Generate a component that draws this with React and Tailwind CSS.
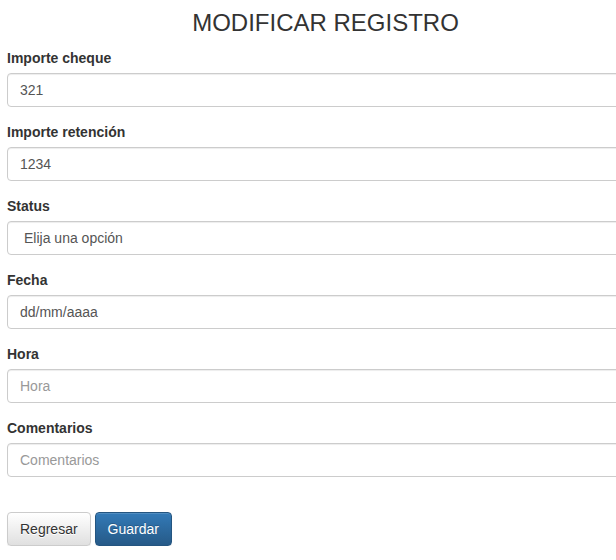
const fields = [
  { label: 'Importe cheque', value: '321' },
  { label: 'Importe retención', value: '1234' },
  { label: 'Status', value: 'Elija una opción', select: true },
  { label: 'Fecha', value: 'dd/mm/aaaa' },
  { label: 'Hora', placeholder: 'Hora' },
  { label: 'Comentarios', placeholder: 'Comentarios' },
];

const inputCls =
  'block w-full h-[34px] px-[12px] py-[6px] text-[14px] leading-[20px] text-[#555] bg-white border border-[#ccc] rounded-[4px] shadow-[inset_0_1px_1px_rgba(0,0,0,0.075)] outline-none placeholder:text-[#999]';

export default function App() {
  return (
    <div className="w-full overflow-hidden bg-white">
      <div
        className="w-[651px] px-[7px] pt-[10px] text-[#333]"
        style={{ fontFamily: '"Liberation Sans", Arial, sans-serif' }}
      >
        {/* Title */}
        <h3 className="text-center text-[24px] leading-[26px] font-normal mb-[12px]">MODIFICAR REGISTRO</h3>

        <form onSubmit={e => e.preventDefault()}>
          {fields.map(f => (
            <div key={f.label} className="mb-[15px]">
              <label className="block text-[14px] leading-[20px] font-bold mb-[5px]">{f.label}</label>
              {f.select ? (
                <div className={`${inputCls} pl-[16px] flex items-center`}>{f.value}</div>
              ) : (
                <input
                  type="text"
                  className={inputCls}
                  defaultValue={f.value}
                  placeholder={f.placeholder}
                />
              )}
            </div>
          ))}

          <div className="pt-[20px] flex gap-[4px]">
            <button
              type="button"
              className="h-[34px] px-[12px] text-[14px] leading-[20px] text-[#333] border border-[#ccc] rounded-[4px] bg-gradient-to-b from-white to-[#e0e0e0] shadow-[inset_0_1px_0_rgba(255,255,255,0.15),0_1px_1px_rgba(0,0,0,0.075)] [text-shadow:0_1px_0_#fff]"
            >
              Regresar
            </button>
            <button
              type="submit"
              className="h-[34px] px-[12px] text-[14px] leading-[20px] text-white border border-[#245580] rounded-[4px] bg-gradient-to-b from-[#337ab7] to-[#265a88] shadow-[inset_0_1px_0_rgba(255,255,255,0.15),0_1px_1px_rgba(0,0,0,0.075)] [text-shadow:0_-1px_0_rgba(0,0,0,0.2)]"
            >
              Guardar
            </button>
          </div>
        </form>
      </div>
    </div>
  );
}
